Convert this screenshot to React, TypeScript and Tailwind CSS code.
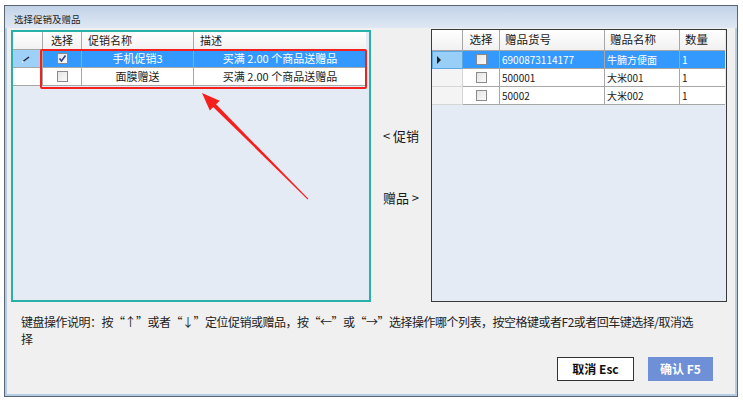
import React from "react";

const font = { fontFamily: '"Noto Sans CJK SC", "Liberation Sans", sans-serif' };

function Check({ checked }: { checked?: boolean }) {
  return (
    <div className="w-[11px] h-[11px] border border-[#8a8a8a] bg-gradient-to-br from-[#e4e4e4] to-[#fbfbfb] flex items-center justify-center">
      {checked && (
        <svg width="9" height="9" viewBox="0 0 9 9">
          <path d="M1.5 4.5 L3.5 7 L7.5 1.5" stroke="#2a3f8f" strokeWidth="1.6" fill="none" />
        </svg>
      )}
    </div>
  );
}

function Pencil() {
  return (
    <svg width="10" height="8" viewBox="0 0 10 8">
      <path d="M2 6.5 L8 2" stroke="#223" strokeWidth="1.4" />
      <path d="M1 7.2 L2.5 6.2" stroke="#fff" strokeWidth="1.2" />
    </svg>
  );
}

const promos = [
  { name: "手机促销3", desc: "买满 2.00 个商品送赠品", checked: true, sel: true },
  { name: "面膜赠送", desc: "买满 2.00 个商品送赠品", checked: false, sel: false },
];

const gifts = [
  { code: "6900873114177", name: "牛腩方便面", qty: "1", sel: true },
  { code: "500001", name: "大米001", qty: "1", sel: false },
  { code: "50002", name: "大米002", qty: "1", sel: false },
];

function LeftGrid() {
  return (
    <div className="w-[353px] text-[11px] text-[#1a1a1a]">
      <div className="grid grid-cols-[30px_39px_112px_172px] h-[18px] bg-gradient-to-b from-white to-[#f1f1f1]">
        <div className="border-r border-b border-[#a7a7a7]" />
        <div className="border-r border-b border-[#a7a7a7] flex items-center justify-center">选择</div>
        <div className="border-r border-b border-[#a7a7a7] flex items-center pl-[6px]">促销名称</div>
        <div className="border-b border-[#a7a7a7] flex items-center pl-[6px]">描述</div>
      </div>
      {promos.map((p) => (
        <div
          key={p.name}
          className={`grid grid-cols-[30px_39px_112px_172px] h-[18px] ${p.sel ? "bg-[#3399ff] text-white" : "bg-white"}`}
        >
          <div
            className={`border-r border-b border-[#a7a7a7] flex items-center pl-[8px] ${p.sel ? "bg-[#9fd0f7]" : "bg-white"}`}
          >
            {p.sel && <Pencil />}
          </div>
          <div className="border-r border-b border-[#a7a7a7] flex items-center justify-center">
            <Check checked={p.checked} />
          </div>
          <div className="border-r border-b border-[#a7a7a7] flex items-center justify-center">{p.name}</div>
          <div className="border-b border-[#a7a7a7] flex items-center justify-center">{p.desc}</div>
        </div>
      ))}
    </div>
  );
}

function RightGrid() {
  return (
    <div className="w-[293px] text-[#1a1a1a]">
      <div className="grid grid-cols-[31px_37px_105px_75px_45px] h-[21px] bg-gradient-to-b from-white to-[#f0f0f0] text-[11.5px]">
        <div className="border-r border-b border-[#a7a7a7]" />
        <div className="border-r border-b border-[#a7a7a7] flex items-center justify-center">选择</div>
        <div className="border-r border-b border-[#a7a7a7] flex items-center pl-[5px]">赠品货号</div>
        <div className="border-r border-b border-[#a7a7a7] flex items-center pl-[5px]">赠品名称</div>
        <div className="border-b border-[#a7a7a7] flex items-center pl-[5px]">数量</div>
      </div>
      {gifts.map((g) => (
        <div
          key={g.code}
          className={`grid grid-cols-[31px_37px_105px_75px_45px] h-[18px] text-[10px] ${g.sel ? "bg-[#3399ff] text-white" : "bg-white"}`}
        >
          <div
            className={`border-r border-b flex items-center pl-[4px] ${g.sel ? "bg-[#98cff6] border border-[#5ea9e2]" : "bg-[#f4f4f4] border-[#d6d6d6]"}`}
          >
            {g.sel && <div className="w-0 h-0 border-y-[4px] border-y-transparent border-l-[4px] border-l-[#222]" />}
          </div>
          <div className="border-r border-b border-[#a7a7a7] flex items-center justify-center">
            <Check />
          </div>
          <div className="border-r border-b border-[#a7a7a7] flex items-center pl-[2px]">{g.code}</div>
          <div className="border-r border-b border-[#a7a7a7] flex items-center pl-[2px]">{g.name}</div>
          <div className="border-b border-[#a7a7a7] flex items-center pl-[2px]">{g.qty}</div>
        </div>
      ))}
    </div>
  );
}

export default function App() {
  return (
    <div className="relative w-[743px] h-[404px] bg-white pl-[4px] pt-[5px]" style={font}>
      <div className="w-[734px] h-[392px] border border-[#5b6672] flex flex-col">
        <div className="h-[22px] shrink-0 bg-gradient-to-b from-[#c2d3e8] to-[#dfe8f3] flex items-center pl-[9px] pt-[5px] text-[9.5px] text-[#1a1a1a]">
          选择促销及赠品
        </div>
        <div className="flex-1 bg-[#f0f0f0] border-x-2 border-b-2 border-[#b4cce4] flex flex-col">
          <div className="flex items-start pl-[4px] pt-[1px]">
            <div className="mt-[1px] w-[360px] h-[272px] border-2 border-[#27b1a8] bg-[#e4ebf4]">
              <LeftGrid />
            </div>
            <div className="w-[60px] flex flex-col items-center text-[13px] text-[#1a1a1a]">
              <div className="mt-[97px]">&lt; 促销</div>
              <div className="mt-[42px]">赠品 &gt;</div>
            </div>
            <div className="w-[296px] h-[273px] border border-[#3a3a3a] bg-[#e4ebf4]">
              <RightGrid />
            </div>
          </div>
          <div className="pl-[14px] mt-[11px] w-[694px] text-[12px] tracking-[-0.5px] leading-[17px] text-[#222]">
            键盘操作说明：按“↑”或者“↓”定位促销或赠品，按“←”或“→”选择操作哪个列表，按空格键或者F2或者回车键选择/取消选择
          </div>
          <div className="flex justify-end gap-[14px] pr-[22px] mt-[10px]">
            <button className="w-[77px] h-[24px] border border-[#333] bg-white text-[12px] font-bold text-[#111]">
              取消 Esc
            </button>
            <button className="w-[65px] h-[24px] bg-[#6f8fd6] text-[12px] font-bold text-white">确认 F5</button>
          </div>
        </div>
      </div>

      <div className="absolute left-[40px] top-[49px] w-[327px] h-[40px] border-2 border-[#f5201c] rounded-[2px] pointer-events-none" />
      <svg className="absolute left-0 top-0 pointer-events-none" width="743" height="404" viewBox="0 0 743 404">
        <polygon points="202,93 219.7,100.8 209.8,110.6" fill="#f5201c" />
        <polygon points="211.6,105.4 214.4,102.6 308.4,198.7 307.6,199.4" fill="#f5201c" />
      </svg>
    </div>
  );
}
